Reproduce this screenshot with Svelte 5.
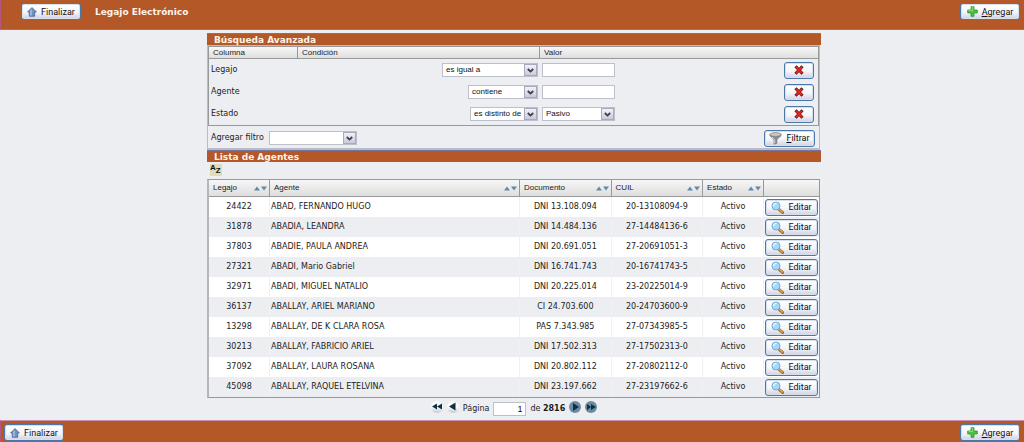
<script lang="ts">
	type Filter = {
		column: string;
		condition: string;
		width: number;
		value: string;
		options?: string[];
	};

	const conditions = ['es igual a', 'es distinto de', 'contiene'];

	let filters: Filter[] = $state([
		{ column: 'Legajo', condition: 'es igual a', width: 96, value: '' },
		{ column: 'Agente', condition: 'contiene', width: 70, value: '' },
		{ column: 'Estado', condition: 'es distinto de', width: 68, value: 'Pasivo', options: ['Activo', 'Pasivo'] }
	]);

	const columns = ['Legajo', 'Agente', 'Documento', 'CUIL', 'Estado'];

	const agents = [
		['24422', 'ABAD, FERNANDO HUGO', 'DNI 13.108.094', '20-13108094-9'],
		['31878', 'ABADIA, LEANDRA', 'DNI 14.484.136', '27-14484136-6'],
		['37803', 'ABADIE, PAULA ANDREA', 'DNI 20.691.051', '27-20691051-3'],
		['27321', 'ABADI, Mario Gabriel', 'DNI 16.741.743', '20-16741743-5'],
		['32971', 'ABADI, MIGUEL NATALIO', 'DNI 20.225.014', '23-20225014-9'],
		['36137', 'ABALLAY, ARIEL MARIANO', 'CI 24.703.600', '20-24703600-9'],
		['13298', 'ABALLAY, DE K CLARA ROSA', 'PAS 7.343.985', '27-07343985-5'],
		['30213', 'ABALLAY, FABRICIO ARIEL', 'DNI 17.502.313', '27-17502313-0'],
		['37092', 'ABALLAY, LAURA ROSANA', 'DNI 20.802.112', '27-20802112-0'],
		['45098', 'ABALLAY, RAQUEL ETELVINA', 'DNI 23.197.662', '27-23197662-6']
	];

	let page = $state('1');

	function removeFilter(filter: Filter) {
		filters = filters.filter((f) => f.column !== filter.column);
	}
</script>

<svelte:head>
	<title>Legajo Electrónico</title>
</svelte:head>

{#snippet house()}
	<svg width="10" height="10" viewBox="0 0 10 10" aria-hidden="true">
		<path d="M5 .6 9.400 5H7.700v4.200H2.300V5H.6z" fill="#6e93c0" stroke="#3f628f" stroke-width=".8" stroke-linejoin="round" />
		<path d="M5 1.800 3 4v4.400h1.800z" fill="#9dbbdc" />
	</svg>
{/snippet}

{#snippet plus()}
	<svg width="11" height="11" viewBox="0 0 11 11" aria-hidden="true">
		<path d="M4 .7h3V4h3.300v3H7v3.300H4V7H.7V4H4z" fill="#4cc040" stroke="#2a9a2a" stroke-width=".8" stroke-linejoin="round" />
		<path d="M4.600 1.400h1v3.200H1.500" fill="none" stroke="#93e37f" stroke-width=".9" />
	</svg>
{/snippet}

{#snippet arrow()}
	<span class="arrow">
		<svg width="7" height="5" viewBox="0 0 7 5" aria-hidden="true">
			<path d="M.8 1 3.500 3.600 6.200 1" fill="none" stroke="#3d3d48" stroke-width="1.800" />
		</svg>
	</span>
{/snippet}

<header class="bar">
	<button class="btn finish">{@render house()}Finalizar</button>
	<h1>Legajo Electrónico</h1>
	<button class="btn add">{@render plus()}<span><u>A</u>gregar</span></button>
</header>

<main>
	<section class="panel">
		<h2>Búsqueda Avanzada</h2>
		<div class="search">
			<table class="filters">
				<colgroup>
					<col class="f-column" />
					<col class="f-condition" />
					<col />
				</colgroup>
				<thead>
					<tr>
						<th>Columna</th>
						<th>Condición</th>
						<th>Valor</th>
					</tr>
				</thead>
				<tbody>
					{#each filters as filter, i (filter.column)}
						<tr>
							<td><label for="valor-{i}">{filter.column}</label></td>
							<td class="condition">
								<span class="select" style:width="{filter.width}px">
									<select bind:value={filter.condition} aria-label="Condición de {filter.column}">
										{#each conditions as condition}
											<option>{condition}</option>
										{/each}
									</select>
									{@render arrow()}
								</span>
							</td>
							<td>
								<div class="value">
									{#if filter.options}
										<span class="select field">
											<select id="valor-{i}" bind:value={filter.value}>
												{#each filter.options as option}
													<option>{option}</option>
												{/each}
											</select>
											{@render arrow()}
										</span>
									{:else}
										<!-- svelte-ignore a11y_autofocus -->
										<input id="valor-{i}" class="field" type="text" bind:value={filter.value} autofocus={i === 0} />
									{/if}
									<button class="btn remove" aria-label="Quitar filtro {filter.column}" onclick={() => removeFilter(filter)}>
										<svg width="10" height="10" viewBox="0 0 10 10" aria-hidden="true">
											<path d="M1.500 1.300 8.500 8.700M8.500 1.300 1.500 8.700" stroke="#5e1010" stroke-width="3" />
											<path d="M2 1.800 8 8.200M8 1.800 2 8.200" stroke="#e5281c" stroke-width="1.800" />
										</svg>
									</button>
								</div>
							</td>
						</tr>
					{/each}
				</tbody>
			</table>
			<div class="add-filter">
				<label for="nuevo-filtro">Agregar filtro</label>
				<span class="select new">
					<select id="nuevo-filtro">
						<option></option>
						<option>Documento</option>
						<option>CUIL</option>
					</select>
					{@render arrow()}
				</span>
				<button class="btn apply">
					<svg width="13" height="13" viewBox="0 0 13 13" aria-hidden="true">
						<path d="M.8 2.600C1 5 4.600 6.400 5 8v4.200l2.800-.9V8c.5-1.600 4.200-3 4.400-5.400z" fill="#8d8d8d" stroke="#626262" stroke-width=".6" />
						<path d="M3 5.200C4.600 6.400 5.500 7 5.700 8.200v3.200" fill="none" stroke="#d8d8d8" stroke-width="1" />
						<ellipse cx="6.500" cy="2.500" rx="5.700" ry="1.900" fill="#c9c9c9" stroke="#777" stroke-width=".7" />
					</svg>
					<span><u>F</u>iltrar</span>
				</button>
			</div>
		</div>
	</section>

	<section class="panel">
		<h2>Lista de Agentes</h2>
		<button class="sort" aria-label="Ordenar">
			<span>A</span><span class="z">Z</span>
		</button>
		<table class="agents">
			<colgroup>
				<col class="c-legajo" />
				<col class="c-agente" />
				<col class="c-documento" />
				<col class="c-cuil" />
				<col class="c-estado" />
				<col />
			</colgroup>
			<thead>
				<tr>
					{#each columns as column}
						<th>
							<div class="heading">
								{column}
								<svg width="13" height="5" viewBox="0 0 13 5" aria-hidden="true">
									<path d="M0 4.500 3 .500 6 4.500zM7 .500h6L10 4.500z" fill="#6289a8" />
								</svg>
							</div>
						</th>
					{/each}
					<th aria-label="Acciones"></th>
				</tr>
			</thead>
			<tbody>
				{#each agents as [legajo, name, document, cuil]}
					<tr>
						<td>{legajo}</td>
						<td class="name">{name}</td>
						<td>{document}</td>
						<td>{cuil}</td>
						<td>Activo</td>
						<td>
							<button class="btn edit">
								<svg width="13" height="13" viewBox="0 0 13 13" aria-hidden="true">
									<path d="M8.200 8.400 11.600 11.600" stroke="#8a5a20" stroke-width="2.800" stroke-linecap="round" />
									<path d="M8.600 8.500 11.400 11.200" stroke="#eea640" stroke-width="1.500" stroke-linecap="round" />
									<circle cx="5" cy="5" r="4" fill="#9fdcfa" stroke="#7ba6cf" />
									<path d="M2.600 5.200A2.600 2.600 0 0 1 5.600 2.400" fill="none" stroke="#e9faff" stroke-width="1.400" />
								</svg>
								Editar
							</button>
						</td>
					</tr>
				{/each}
			</tbody>
		</table>
		<nav class="pager" aria-label="Páginas">
			<button class="nav off" aria-label="Primera página">
				<svg width="12" height="12" viewBox="0 0 12 12" aria-hidden="true">
					<path d="M6 2.500v6L1 5.500zM11 2.500v6L6 5.500z" fill="#0d3049" />
				</svg>
			</button>
			<button class="nav off" aria-label="Página anterior">
				<svg width="12" height="12" viewBox="0 0 12 12" aria-hidden="true">
					<path d="M8.500 1.500v8L2 5.500z" fill="#0d3049" />
				</svg>
			</button>
			<label for="pagina">Página</label>
			<input id="pagina" type="text" bind:value={page} />
			<span>de <b>2816</b></span>
			<button class="nav" aria-label="Página siguiente">
				<svg width="12" height="12" viewBox="0 0 12 12" aria-hidden="true">
					<path d="M4 2v8l6-4z" fill="#0d3049" />
				</svg>
			</button>
			<button class="nav" aria-label="Última página">
				<svg width="12" height="12" viewBox="0 0 12 12" aria-hidden="true">
					<path d="M2 3v6l4-3zM6 3v6l5-3z" fill="#0d3049" />
				</svg>
			</button>
		</nav>
	</section>
</main>

<footer class="bar bottom">
	<button class="btn finish">{@render house()}Finalizar</button>
	<button class="btn add">{@render plus()}<span><u>A</u>gregar</span></button>
</footer>

<style>
	:global(body) {
		margin: 0;
		background: #edeef2;
		color: #1c1c1c;
		font-family: 'DejaVu Sans', Verdana, sans-serif;
		font-size: 8px;
		line-height: 12px;
	}

	* {
		box-sizing: border-box;
	}

	.bar {
		display: flex;
		align-items: flex-start;
		height: 30px;
		padding: 3px 4px 0 20px;
		background: #b45827;
		border-left: 1px solid #b75583;
		border-bottom: 1px solid #bb5e86;
	}

	.bottom {
		height: 22px;
		padding: 3px 4px 0 3px;
		border-top: 1px solid #c98fb4;
		border-bottom: 0;
	}

	h1,
	h2 {
		margin: 0;
		color: #fff3e8;
		font-size: 9px;
		line-height: 12px;
	}

	h1 {
		padding: 3px 14px;
	}

	.btn {
		display: flex;
		align-items: center;
		justify-content: center;
		gap: 4px;
		height: 17px;
		padding: 0;
		border: 1px solid #4a78a8;
		border-radius: 3px;
		background: linear-gradient(#fff, #f5f5fb 55%, #d0d0e2);
		box-shadow: inset 0 0 0 1px #d5e0ee;
		color: #111;
		font-family: Roboto, 'Liberation Sans', sans-serif;
		font-size: 9px;
		line-height: 12px;
	}

	.finish {
		width: 60px;
	}

	.add {
		width: 60px;
		margin-left: auto;
	}

	main {
		padding: 3px 0 3px 4px;
	}

	.panel {
		width: calc(60% + 2px);
		margin: 0 auto;
	}

	h2 {
		height: 12px;
		padding-left: 7px;
		background: #b45827;
		border-top: 1px solid #7674a5;
	}

	table {
		width: 100%;
		border-collapse: separate;
		border-spacing: 0;
		table-layout: fixed;
	}

	th {
		padding: 0 4px;
		background: linear-gradient(#f7f7f7, #dedede);
		border-right: 1px solid #999;
		border-bottom: 1px solid #999;
		font-family: 'Liberation Sans', Arial, sans-serif;
		font-weight: normal;
		text-align: left;
	}

	th:last-child {
		border-right: 0;
	}

	.search {
		margin-right: 1px;
		border: 1px solid #bbbcc0;
		border-bottom-width: 2px;
	}

	.filters {
		border: 1px solid #999;
	}

	.filters th {
		height: 12px;
		line-height: 11px;
	}

	.filters td {
		height: 22px;
		padding: 0 2px;
	}

	.f-column {
		width: 89px;
	}

	.f-condition {
		width: 242px;
	}

	.filters .condition {
		text-align: right;
	}

	.value {
		display: flex;
		align-items: center;
		justify-content: space-between;
		padding-right: 2px;
	}

	.select {
		display: inline-block;
		position: relative;
		height: 14px;
		vertical-align: middle;
	}

	select,
	input {
		height: 14px;
		margin: 0;
		padding: 0 3px;
		border: 1px solid #bcc0cb;
		border-radius: 0;
		outline: none;
		background: #fff;
		color: #111;
		font-family: 'Liberation Sans', Arial, sans-serif;
		font-size: 8px;
		line-height: 12px;
	}

	input {
		text-align: right;
	}

	select {
		display: block;
		width: 100%;
		appearance: none;
	}

	.arrow {
		display: flex;
		align-items: center;
		justify-content: center;
		position: absolute;
		top: 1px;
		right: 1px;
		bottom: 1px;
		width: 13px;
		border: 1px solid #a9a9bd;
		background: linear-gradient(#f2f2f8, #c9c9dc);
		pointer-events: none;
	}

	.field {
		width: 73px;
	}

	.new {
		width: 88px;
	}

	.remove {
		width: 30px;
	}

	.add-filter {
		display: flex;
		align-items: center;
		gap: 5px;
		height: 22px;
		padding: 2px 4px 0 3px;
	}

	.apply {
		width: 51px;
		margin-left: auto;
	}

	.sort {
		display: flex;
		align-items: flex-start;
		width: 12px;
		height: 12px;
		margin: 2px 3px 3px;
		padding: 0;
		border: 0;
		background: #deddb9;
		color: #111;
		font: bold 8px/8px 'Liberation Sans', Arial, sans-serif;
	}

	.z {
		padding-top: 3px;
	}

	.agents {
		width: calc(100% - 1px);
		border: 1px solid #999;
		border-left: 2px solid #b5b6ba;
	}

	.agents th {
		height: 17px;
	}

	.heading {
		display: flex;
		align-items: center;
		justify-content: space-between;
		margin-right: -2px;
	}

	.agents td {
		height: 20px;
		padding: 0 1px;
		border-right: 1px solid #f1f1f4;
		text-align: center;
	}

	.agents td:last-child {
		border-right: 0;
	}

	.agents tbody tr:nth-child(odd) {
		background: #fff;
	}

	.agents .name {
		text-align: left;
	}

	.c-legajo {
		width: 10%;
	}

	.c-agente {
		width: 41%;
	}

	.c-documento,
	.c-cuil {
		width: 15%;
	}

	.c-estado {
		width: 10%;
	}

	.edit {
		width: 100%;
	}

	.pager {
		display: flex;
		align-items: center;
		justify-content: center;
		gap: 4px;
		height: 19px;
		padding-top: 3px;
	}

	.pager input {
		width: 33px;
		font-size: 9px;
	}

	.nav {
		display: flex;
		width: 12px;
		height: 12px;
		margin-bottom: 4px;
		padding: 0;
		border: 0;
		border-radius: 50%;
		background: #6c8ba1;
	}

	.off {
		background: linear-gradient(#fafafa 50%, #c9c9c9);
	}
</style>
